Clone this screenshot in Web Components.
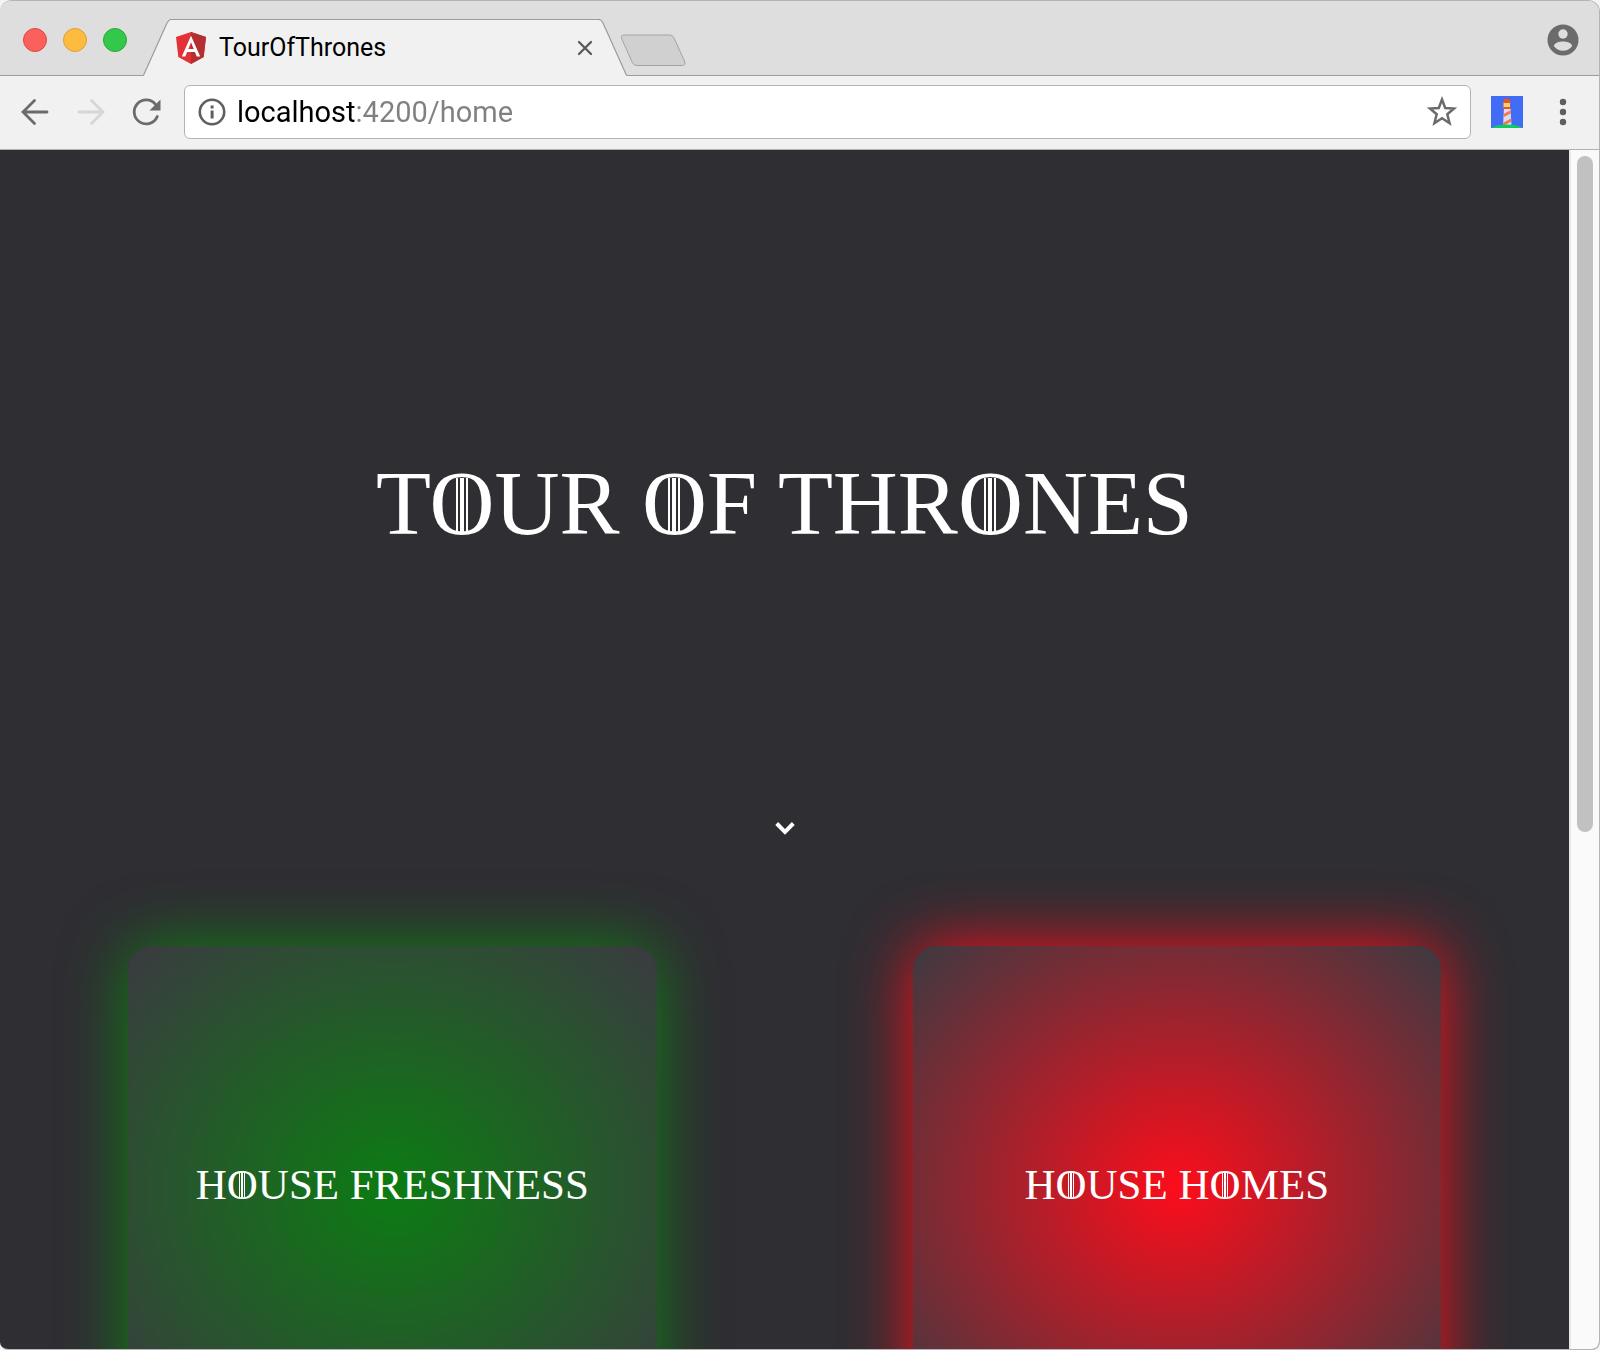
<!DOCTYPE html>
<html lang="en">
<head>
<meta charset="utf-8">
<title>TourOfThrones</title>
<style>
html,body{margin:0;height:100%;background:#f4f4f4}
body{overflow:hidden}
</style>
</head>
<body>
<browser-window>
  <browser-tabs slot="tabs" label="TourOfThrones"></browser-tabs>
  <browser-toolbar slot="toolbar" url="localhost:4200/home"></browser-toolbar>
  <home-page>
    <throne-hero text="TOUR OF THRONES"></throne-hero>
    <house-list>
      <house-card name="HOUSE FRESHNESS" style="--house:#0c7c12;--glow:#0f7f13;--edge:#3b3a41"></house-card>
      <house-card name="HOUSE HOMES" style="--house:#fc0d1b;--glow:#fc0d1b;--edge:#3c3a41"></house-card>
    </house-list>
  </home-page>
</browser-window>
<script>
const define = (name, css, html) => customElements.define(name, class extends HTMLElement {
  constructor() {
    super();
    this.attachShadow({mode: 'open'});
  }
  connectedCallback() {
    this.shadowRoot.innerHTML = `<style>*{box-sizing:border-box}button{padding:0;border:0;background:none;display:flex;align-items:center;justify-content:center}svg{display:block}${css}</style>${typeof html === 'function' ? html(this) : html}`;
  }
});

/* Display lettering: every O carries vertical bars through its bowl. */
const barred = text => text.replace(/O/g, '<span class="o">O</span>');
const barredCss = `.o{background:linear-gradient(90deg,#fff 0 17%,transparent 17% 34%,#fff 34% 66%,transparent 66% 83%,#fff 83%) no-repeat 50% 54%/var(--bars) 55%}`;

define('browser-window', `
:host{display:flex;flex-direction:column;height:100vh;border:1px solid #b4b4b4;border-left:0;border-radius:12px 12px 8px 8px;overflow:hidden;background:#dedede;box-sizing:border-box}
main{flex:1;min-height:0;display:flex;background:#2f2e33}
.page{flex:1;min-width:0;overflow:hidden}
.scroll{width:30px;background:#fafafa;border-left:2px solid #e8e8e8;padding:6px 6px 0;flex:none}
.thumb{height:676px;border-radius:8px;background:#c1c1c1}
`, `<slot name="tabs"></slot><slot name="toolbar"></slot><main><div class="page"><slot></slot></div><div class="scroll"><div class="thumb"></div></div></main>`);

define('browser-tabs', `
:host{display:flex;height:75px;background:linear-gradient(#9c9c9c,#9c9c9c) bottom/100% 1px no-repeat #dedede;font:25px/30px Roboto,sans-serif;color:#000}
.lights{display:flex;gap:16px;padding:27px 0 0 23px;width:143px;flex:none}
.lights button{width:24px;height:24px;border-radius:50%;background:var(--c);border:1px solid var(--b)}
.tab{width:484px;height:57px;margin-top:18px;display:grid;flex:none}
.tab>*{grid-area:1/1}
.content{display:flex;align-items:center;padding:0 34px 0 33px}
.content span{flex:1;padding-left:13px}
.new{margin:33px 0 0 -7px;align-self:flex-start}
.user{margin:23px 20px 0 auto;align-self:flex-start}
`, el => `
<div class="lights"><button aria-label="Close window" style="--c:#fc605c;--b:#e0443e"></button><button aria-label="Minimize" style="--c:#fdbc40;--b:#dfa034"></button><button aria-label="Zoom" style="--c:#34c84a;--b:#27a835"></button></div>
<div class="tab">
<svg width="484" height="57"><path d="M0 57V56.5C1 56 1 55 2 53L24 4Q26 .5 28 .5H456Q458 .5 460 4L482 53C483 55 483 56.500 484 56.500V57" fill="#f1f1f1"/><path d="M0 56.500C1 56 1 55 2 53L24 4Q26 .5 28 .5H456Q458 .5 460 4L482 53Q483 56 484 56.500" fill="none" stroke="#9c9c9c" stroke-width="1.200"/></svg>
<div class="content">
<svg width="30" height="32" viewBox="0 0 30 32"><path d="M15 0 30 5 27.700 25 15 32 2.300 25 0 5Z" fill="#e23237"/><path d="M15 0 30 5 27.700 25 15 32Z" fill="#b52e31"/><path d="M15 3.800 5.800 24.500H9.300L11.100 20H18.900L20.700 24.500H24.200ZM15 10.200 17.700 17H12.300Z" fill="#fff" fill-rule="evenodd"/></svg>
<span>${el.getAttribute('label')}</span>
<button aria-label="Close tab"><svg width="16" height="16"><path d="M2 2 14 14M14 2 2 14" stroke="#5a5a5a" stroke-width="2.300" stroke-linecap="round"/></svg></button>
</div></div>
<button class="new" aria-label="New tab"><svg width="66" height="33"><path d="M3.500 1H50Q52.500 1 54 4L64.500 27Q66 31.500 62.500 31.500H17Q14 31.500 12.500 29L1.800 5Q.5 1 3.500 1Z" fill="#d0d0d0" stroke="#a3a3a3"/></svg></button>
<button class="user" aria-label="Profile"><svg width="32" height="32"><circle cx="16" cy="16" r="15.500" fill="#6b6b6b"/><circle cx="16" cy="10" r="4.700" fill="#dedede"/><path d="M6.800 22C8 18.500 12 17.500 16 17.500S24 18.500 25.200 22C23 25 20 26.800 16 26.800S9 25 6.800 22Z" fill="#dedede"/></svg></button>`);

define('browser-toolbar', `
:host{display:flex;align-items:center;height:74px;padding:0 16px 2px 18px;background:#f1f1f1;border-bottom:1px solid #b0b0b0;box-sizing:border-box;font:29px/36px Roboto,sans-serif}
nav{display:flex;gap:24px;margin-right:22px}
form{flex:1;min-width:0;display:flex;align-items:center;height:54px;background:#fff;border:1px solid #b4b4b4;border-radius:6px;padding:0 12px;gap:10px}
input{flex:1;min-width:0;border:0;padding:0;outline:0;font:inherit;color:transparent;background:linear-gradient(90deg,#000 120px,#808080 120px);-webkit-background-clip:text;background-clip:text}
.ext{margin:0 20px}
`, el => `
<nav>
<button aria-label="Back"><svg width="32" height="32" fill="none" stroke="#6b6b6b" stroke-width="2.800" stroke-linecap="round"><path d="M29 16H5M16.500 4.500 5 16 16.500 27.500"/></svg></button>
<button aria-label="Forward"><svg width="32" height="32" fill="none" stroke="#d6d6d6" stroke-width="2.800" stroke-linecap="round"><path d="M5 16H29M17.500 4.500 29 16 17.500 27.500"/></svg></button>
<button aria-label="Reload"><svg width="32" height="32"><path d="M27.300 20.500A12 12 0 1 1 25.500 8.300" fill="none" stroke="#6b6b6b" stroke-width="2.800" stroke-linecap="round"/><path d="M30.500 3.500V14.500H19.500Z" fill="#6b6b6b"/></svg></button>
</nav>
<form>
<svg width="30" height="30"><circle cx="15" cy="15" r="12.200" fill="none" stroke="#5f5f5f" stroke-width="2.600"/><path d="M13.600 8.500h3v3h-3zM13.600 13.500h3v8h-3z" fill="#5f5f5f"/></svg>
<input aria-label="Address" value="${el.getAttribute('url')}" spellcheck="false">
<button type="button" aria-label="Bookmark"><svg width="32" height="32"><path d="M16 3.500 19.200 12 28 12.500 21.300 18.200 23.600 27.200 16 22.300 8.400 27.200 10.700 18.200 4 12.500 12.800 12Z" fill="none" stroke="#6b6b6b" stroke-width="2.500"/></svg></button>
</form>
<button class="ext" aria-label="Lighthouse"><svg width="32" height="32"><defs><clipPath id="t"><path d="M13 13H19.500L20.500 30H12Z"/></clipPath></defs><path fill="#416cf6" d="M0 0H32V32H0Z"/><path fill="#d8dcf5" d="M13 12H19.500L20.500 30H12Z"/><g clip-path="url(#t)" stroke="#f4764a" stroke-width="2.800"><path d="M9 21.500 23 14M9 30 23 22.500"/></g><path fill="#fbd36a" d="M12.500 6H19V12H12.500Z"/><path fill="#ee5226" d="M12 7Q12 2.500 15.800 2.500T19.600 7ZM11.500 11H20V13H11.500Z"/><path fill="#0fc964" d="M1 32Q4 28.500 16 28.500T31 32Z"/></svg></button>
<button aria-label="Menu"><svg width="40" height="32" fill="#5f5f5f"><circle cx="20" cy="6" r="3.200"/><circle cx="20" cy="16" r="3.200"/><circle cx="20" cy="26" r="3.200"/></svg></button>`);

define('home-page', `:host{display:block;color:#fff;font-family:"Liberation Serif",serif}`, `<slot></slot>`);

define('throne-hero', `
:host{display:grid;grid-template-rows:1fr auto 1fr;justify-items:center;height:708px}
h1{grid-row:2;margin:0;font-size:90px;line-height:100px;font-weight:400;text-align:center;--bars:12px}
button{grid-row:3;align-self:end;width:48px;height:60px;color:#fff}
${barredCss}`, el => `<h1>${barred(el.getAttribute('text'))}</h1>
<button aria-label="Scroll to houses"><svg width="24" height="24"><path d="M3.700 7.500 12 15.800 20.300 7.500" fill="none" stroke="#fff" stroke-width="4"/></svg></button>`);

define('house-list', `:host{display:flex;gap:256px;padding:88px 128px}`, `<slot></slot>`);

define('house-card', `
:host{flex:1;display:flex;align-items:center;justify-content:center;height:484px;padding-bottom:6px;box-sizing:border-box;border-radius:24px;background:radial-gradient(var(--house),var(--edge));box-shadow:0 0 64px var(--glow)}
h2{margin:0;font-size:43px;line-height:48px;font-weight:400;white-space:nowrap;--bars:6px}
${barredCss}`, el => `<h2>${barred(el.getAttribute('name'))}</h2>`);
</script>
</body>
</html>
